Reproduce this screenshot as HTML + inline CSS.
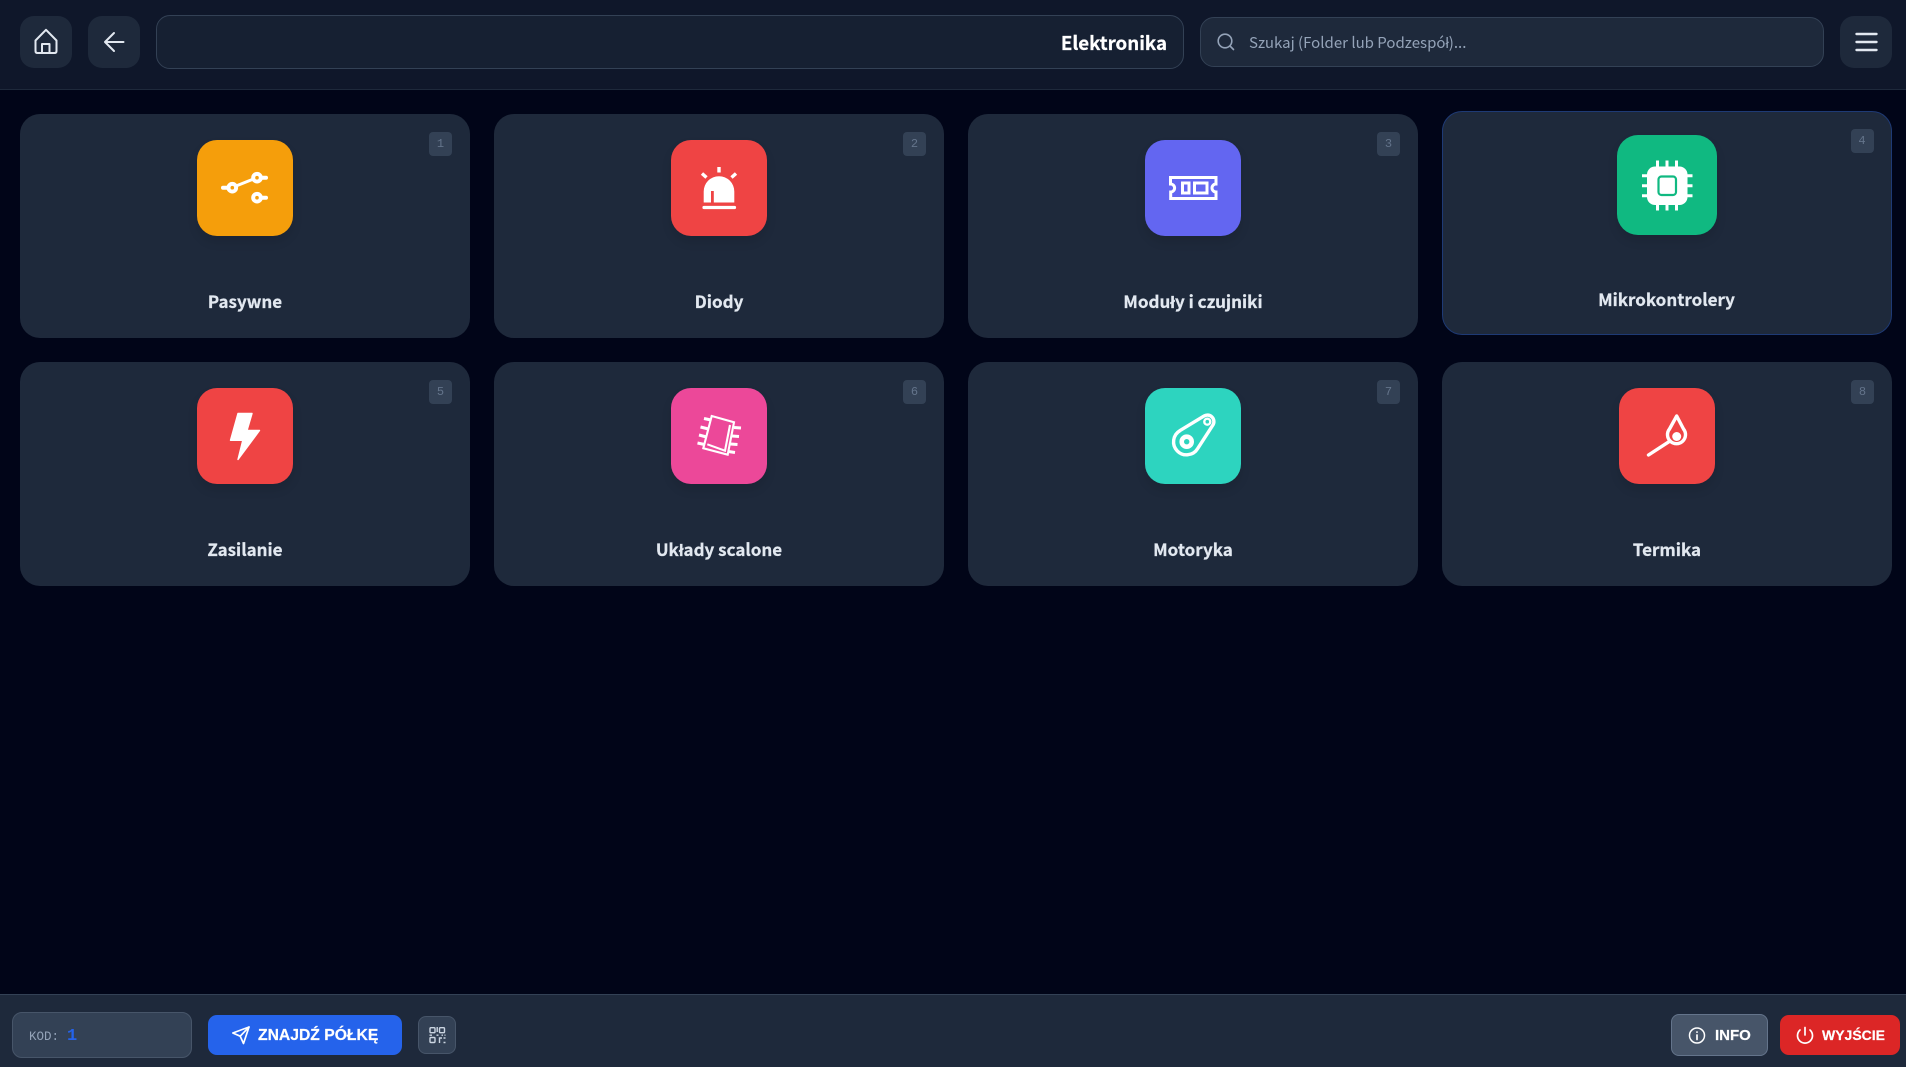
<!DOCTYPE html>
<html lang="pl">
<head>
<meta charset="utf-8">
<title>Elektronika</title>
<style>
*{box-sizing:border-box;margin:0;padding:0}
html,body{width:1906px;height:1067px;overflow:hidden;background:#010518;font-family:"Liberation Sans","Noto Sans CJK JP",sans-serif}
.a{position:absolute}
svg{display:block;position:absolute;left:0;top:0}
.header{left:0;top:0;width:1906px;height:90px;background:#0f172a;border-bottom:1px solid #1e293b}
.tb{background:#1e293b;border-radius:14px;width:52px;height:52px;top:16px}
.crumb{left:156px;top:15px;width:1028px;height:54px;background:#162032;border:1px solid #334155;border-radius:14px;color:#fff;font:700 18.7px/53px "Noto Sans CJK JP","Liberation Sans",sans-serif;-webkit-text-stroke:.25px #fff;text-align:right;padding-right:16px}
.search{left:1200px;top:17px;width:624px;height:50px;background:#1e293b;border:1px solid #334155;border-radius:14px;color:#94a3b8;font:400 15px/49px "Noto Sans CJK JP","Liberation Sans",sans-serif;padding-left:48px}
.card{width:450px;height:224px;background:#1e293b;border-radius:20px}
.card.hov{border:1.5px solid #1e3a75}
.ico{left:177px;top:26px;width:96px;height:96px;border-radius:20px;box-shadow:0 6px 10px rgba(0,0,0,.1)}
.hov .ico{left:173.5px;top:22.5px;width:100.8px;height:100.8px;border-radius:21px}
.lab{left:0;width:450px;top:172.5px;height:28px;text-align:center;color:#e2e8f0;font:700 17px/28px "Noto Sans CJK JP","Liberation Sans",sans-serif;-webkit-text-stroke:.25px #e2e8f0}
.hov .lab{left:-1.5px;top:172.5px}
.bad{left:409px;top:18px;width:23px;height:24px;background:#334155;border-radius:4px;color:#64748b;font:400 12px/25px "Liberation Mono",monospace;text-align:center}
.hov .bad{left:407.5px;top:17px}
.footer{left:0;top:994px;width:1906px;height:73px;background:#1e293b;border-top:1px solid #334155}
.code{left:12px;top:1012px;width:180px;height:46px;background:#334155;border:1px solid #475569;border-radius:10px}
.btn{color:#fff;font:700 16px/41px "Liberation Sans",sans-serif;white-space:nowrap;-webkit-text-stroke:.2px #fff}
</style>
</head>
<body>
<div class="a header"></div>
<div class="a tb" style="left:20px">
<svg width="52" height="52" viewBox="0 0 52 52" fill="none" stroke="#e2e8f0" stroke-width="2" stroke-linecap="round" stroke-linejoin="round"><path d="M15.5 35V24.5L26 13.8 36.5 24.500V35Q36.500 37 34.500 37H17.500Q15.500 37 15.500 35Z"/><path d="M22 37V28H29.500V37"/></svg>
</div>
<div class="a tb" style="left:88px">
<svg width="52" height="52" viewBox="0 0 52 52" fill="none" stroke="#e2e8f0" stroke-width="2" stroke-linecap="round" stroke-linejoin="round"><path d="M35.5 26H17M26 17 17 26 26 35"/></svg>
</div>
<div class="a crumb">Elektronika</div>
<div class="a search">Szukaj (Folder lub Podzespół)...
<svg width="50" height="50" viewBox="0 0 50 50" fill="none" stroke="#94a3b8" stroke-width="1.6" stroke-linecap="round"><circle cx="24" cy="23" r="6.800"/><path d="M29 28 32.500 31.500"/></svg>
</div>
<div class="a tb" style="left:1840px">
<svg width="52" height="52" viewBox="0 0 52 52" fill="none" stroke="#e2e8f0" stroke-width="2.400" stroke-linecap="round"><path d="M16.5 18H36.5M16.5 26H36.5M16.5 34H36.5"/></svg>
</div>

<!-- Row 1 -->
<div class="a card" style="left:20px;top:114px">
<div class="a ico" style="background:#f59e0b">
<svg width="96" height="96" viewBox="0 0 96 96" fill="none" stroke="#fff" stroke-width="4" stroke-linecap="round"><circle cx="35.3" cy="47.7" r="3.800"/><circle cx="60" cy="37.7" r="3.800"/><circle cx="60" cy="57.7" r="3.800"/><path d="M26 47.700H31M64 37.700H69M64 57.700H69"/><path d="M39 46 56.500 39" stroke-width="3"/></svg>
</div>
<div class="a lab">Pasywne</div><div class="a bad">1</div>
</div>
<div class="a card" style="left:494px;top:114px">
<div class="a ico" style="background:#ef4444">
<svg width="96" height="96" viewBox="0 0 96 96"><path fill="#fff" d="M32.700 62.500V51.500a15.300 15.300 0 0 1 30.600 0V62.500H42.800V51H40V62.500Z"/><path fill="none" stroke="#fff" stroke-width="3.200" stroke-linecap="round" d="M33 67.500H63.500"/><path fill="none" stroke="#fff" stroke-width="3.400" d="M48 27V32.500M31 33.500 35.500 37.500M65 33.500 60.500 37.500"/></svg>
</div>
<div class="a lab">Diody</div><div class="a bad">2</div>
</div>
<div class="a card" style="left:968px;top:114px">
<div class="a ico" style="background:#6366f1">
<svg width="96" height="96" viewBox="0 0 96 96" fill="none" stroke="#fff" stroke-width="3"><path d="M25.500 37.500H71V44A4 4 0 0 0 71 52V58.500H25.700V52A4 4 0 0 0 25.500 44Z"/><rect x="37.500" y="43" width="6.500" height="10"/><rect x="49.500" y="43" width="12.500" height="10"/></svg>
</div>
<div class="a lab">Moduły i czujniki</div><div class="a bad">3</div>
</div>
<div class="a card hov" style="left:1442px;top:111px">
<div class="a ico" style="background:#10b981">
<svg width="100.800" height="100.800" viewBox="0 0 100.800 100.800"><rect x="30" y="31.500" width="40.500" height="38.500" rx="8" fill="#fff"/><rect x="41.500" y="41.500" width="17.500" height="18.500" rx="3" fill="#fff" stroke="#10b981" stroke-width="2.200"/><path fill="none" stroke="#fff" stroke-width="3" d="M40.500 25.500V33M50 25.500V33M59.500 25.500V33M40.500 68V75.500M50 68V75.500M59.500 68V75.500M25 40.700H32M25 50.700H32M25 60.700H32M68.500 40.700H75.500M68.500 50.700H75.500M68.500 60.700H75.500"/></svg>
</div>
<div class="a lab">Mikrokontrolery</div><div class="a bad">4</div>
</div>

<!-- Row 2 -->
<div class="a card" style="left:20px;top:362px">
<div class="a ico" style="background:#ef4444">
<svg width="96" height="96" viewBox="0 0 96 96"><path fill="#fff" stroke="#fff" stroke-width="1.400" stroke-linejoin="round" d="M41 25.500H55L50 42.500H62.500L41 71.500 45.800 52.300H33.500Z"/></svg>
</div>
<div class="a lab">Zasilanie</div><div class="a bad">5</div>
</div>
<div class="a card" style="left:494px;top:362px">
<div class="a ico" style="background:#ec4899">
<svg width="96" height="96" viewBox="0 0 96 96" fill="none" stroke="#fff" stroke-width="2.100"><path d="M40.700 28 63 34.300 56.700 66.700 32.300 60.300Z"/><path d="M59 37 54 62.700 36.300 56.300"/><path stroke-width="3" d="M33 30.500 40 32M29.500 39 37.500 41M28 47 35.500 49M26.500 55 33.500 56.500M63 39.500 70 40M61 48 68 48.500M59.500 56 66.500 56.500M57.500 63.500 64 64.500"/></svg>
</div>
<div class="a lab">Układy scalone</div><div class="a bad">6</div>
</div>
<div class="a card" style="left:968px;top:362px">
<div class="a ico" style="background:#2dd4bf">
<svg width="96" height="96" viewBox="0 0 96 96" fill="none" stroke="#fff" stroke-width="3.400" stroke-linejoin="round"><path d="M35 42.600 58.900 28.100A6.500 6.500 0 0 1 67.800 37.200L52.600 60.700A13 13 0 1 1 35 42.600Z"/><circle cx="41.700" cy="53.700" r="5" stroke-width="4.600"/><circle cx="62.300" cy="33.700" r="3" stroke-width="2.400"/></svg>
</div>
<div class="a lab">Motoryka</div><div class="a bad">7</div>
</div>
<div class="a card" style="left:1442px;top:362px">
<div class="a ico" style="background:#ef4444">
<svg width="96" height="96" viewBox="0 0 96 96" fill="none" stroke="#fff" stroke-width="3.400" stroke-linecap="round" stroke-linejoin="round"><path d="M57.700 28 64.500 41A9 9 0 1 1 50.500 41Z"/><circle cx="57.700" cy="48.500" r="4.500" fill="#fff" stroke="none"/><path d="M29.500 67 50 53.700"/></svg>
</div>
<div class="a lab">Termika</div><div class="a bad">8</div>
</div>

<!-- Footer -->
<div class="a footer"></div>
<div class="a code"></div>
<div class="a" style="left:29px;top:1029px;color:#94a3b8;font:400 12.500px/16px 'Liberation Mono',monospace">KOD:</div>
<div class="a" style="left:67px;top:1026px;color:#2563eb;font:700 17px/22px 'Liberation Mono',monospace">1</div>

<div class="a btn" style="left:208px;top:1015px;width:194px;height:40px;background:#2563eb;border-radius:9px">
<svg width="40" height="40" viewBox="0 0 40 40" fill="none" stroke="#fff" stroke-width="1.700" stroke-linejoin="round" stroke-linecap="round" style="left:15px"><path d="M26 12 9.800 18 17.200 21.200 20.500 28.500Z"/><path d="M17.200 21.200 26 12"/></svg>
<span class="a" style="left:50px;top:0;font-size:15.700px">ZNAJDŹ PÓŁKĘ</span>
</div>
<div class="a" style="left:418px;top:1016px;width:38px;height:38px;background:#334155;border:1px solid #475569;border-radius:8px">
<svg width="36" height="36" viewBox="0 0 36 36" fill="none" stroke="#cbd5e1" stroke-width="1.400" style="left:0"><rect x="11" y="10.700" width="5" height="5" rx="1"/><rect x="20.500" y="10.700" width="5" height="5" rx="1"/><rect x="11" y="20.500" width="5" height="5" rx="1"/><path d="M20.500 26V21H23M24.500 21H26.500M24.500 25.500H26.500M10.500 18.200H13M18.200 10V15M17.500 18.200H19.500M22.500 18.200H24M25.500 18.200H26.500"/></svg>
</div>

<div class="a btn" style="left:1671px;top:1014px;width:97px;height:42px;background:#475569;border:1px solid #64748b;border-radius:8px">
<svg width="40" height="40" viewBox="0 0 40 40" fill="none" stroke="#fff" stroke-width="1.500" stroke-linecap="round"><circle cx="25" cy="20.500" r="7.500"/><path d="M25 20V24.500M25 17V17.200" stroke-width="1.700"/></svg>
<span class="a" style="left:43px;top:0;font-size:15px">INFO</span>
</div>
<div class="a btn" style="left:1780px;top:1015px;width:120px;height:40px;background:#dc2626;border-radius:9px">
<svg width="40" height="40" viewBox="0 0 40 40" fill="none" stroke="#fff" stroke-width="1.700" stroke-linecap="round"><path d="M25 12.500V20M20 15A7.500 7.500 0 1 0 30 15"/></svg>
<span class="a" style="left:42px;top:0;font-size:14px">WYJŚCIE</span>
</div>
</body>
</html>
